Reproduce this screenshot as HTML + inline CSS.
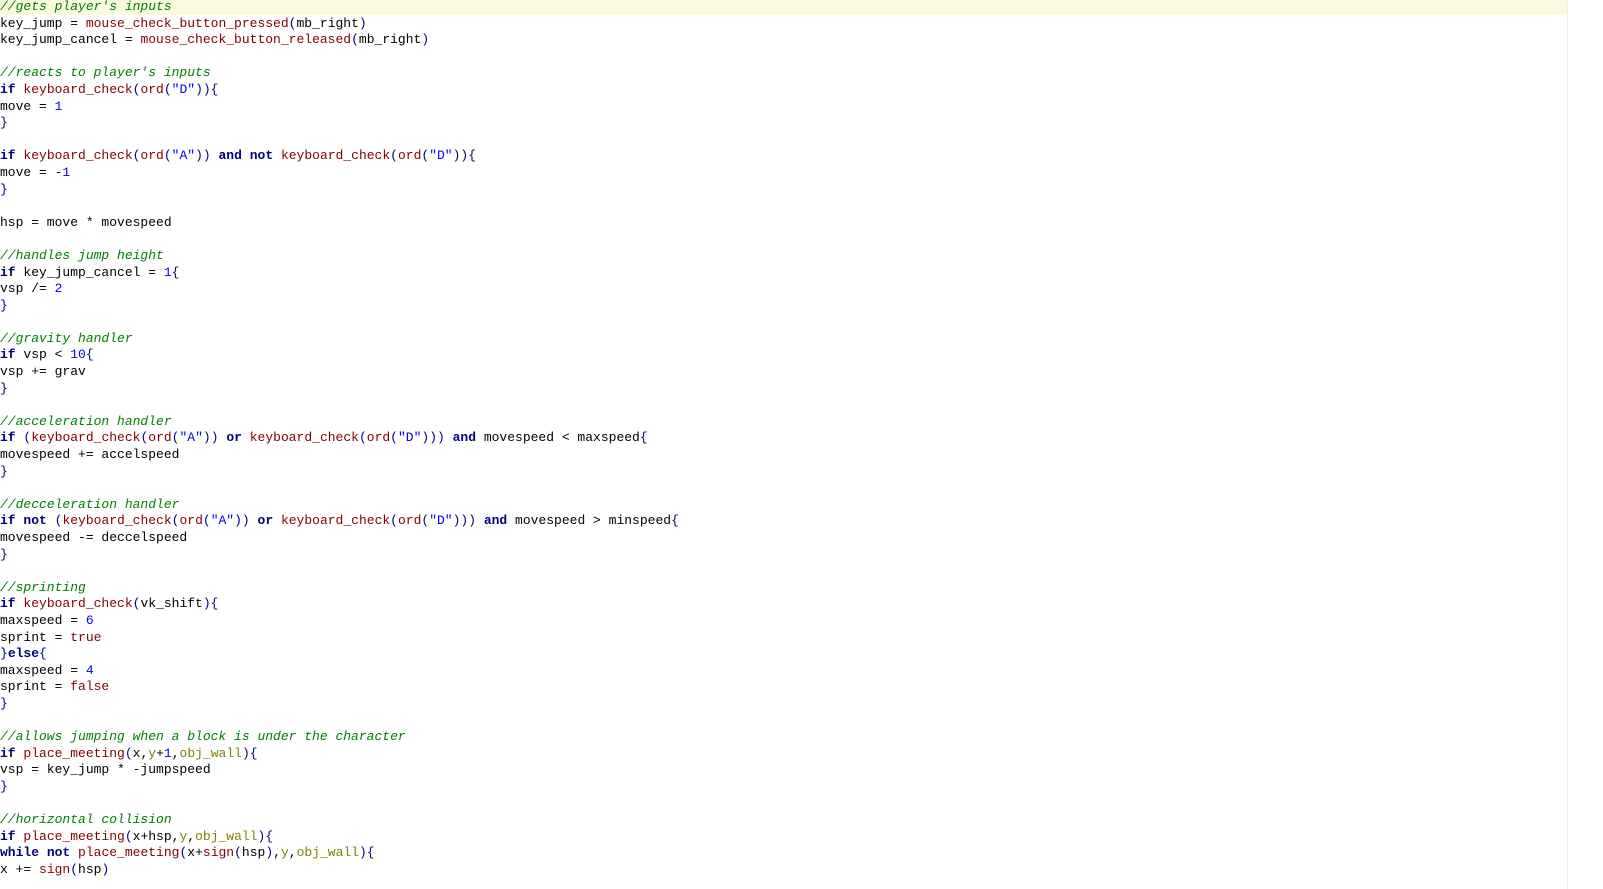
<!DOCTYPE html>
<html><head><meta charset="utf-8"><style>
html,body{margin:0;padding:0;background:#fff;width:1603px;height:889px;overflow:hidden}
pre{margin:0;font-family:"Liberation Mono",monospace;font-size:13px;line-height:16.6px;color:#000;white-space:pre;position:relative}
.hl{position:absolute;left:0;top:0;width:1568px;height:15px;background:#fafae1}
.sb{position:absolute;right:0;top:0;width:35px;height:889px;background:#fff;border-left:1px solid #f0f0f0}
.c{color:#008000;font-style:italic}
.f{color:#800000}
.k{color:#000080;font-weight:bold}
.n{color:#0000ff}
.p{color:#000080}
.o{color:#808000}
</style></head><body>
<div class="hl"></div><div class="sb"></div>
<pre style="top:-1px"><span class="c">//gets player's inputs</span>
key_jump = <span class="f">mouse_check_button_pressed</span><span class="p">(</span>mb_right<span class="p">)</span>
key_jump_cancel = <span class="f">mouse_check_button_released</span><span class="p">(</span>mb_right<span class="p">)</span>

<span class="c">//reacts to player's inputs</span>
<span class="k">if</span> <span class="f">keyboard_check</span><span class="p">(</span><span class="f">ord</span><span class="p">(</span><span class="n">"D"</span><span class="p">)){</span>
move = <span class="n">1</span>
<span class="p">}</span>

<span class="k">if</span> <span class="f">keyboard_check</span><span class="p">(</span><span class="f">ord</span><span class="p">(</span><span class="n">"A"</span><span class="p">))</span> <span class="k">and</span> <span class="k">not</span> <span class="f">keyboard_check</span><span class="p">(</span><span class="f">ord</span><span class="p">(</span><span class="n">"D"</span><span class="p">)){</span>
move = -<span class="n">1</span>
<span class="p">}</span>

hsp = move * movespeed

<span class="c">//handles jump height</span>
<span class="k">if</span> key_jump_cancel = <span class="n">1</span><span class="p">{</span>
vsp /= <span class="n">2</span>
<span class="p">}</span>

<span class="c">//gravity handler</span>
<span class="k">if</span> vsp &lt; <span class="n">10</span><span class="p">{</span>
vsp += grav
<span class="p">}</span>

<span class="c">//acceleration handler</span>
<span class="k">if</span> <span class="p">(</span><span class="f">keyboard_check</span><span class="p">(</span><span class="f">ord</span><span class="p">(</span><span class="n">"A"</span><span class="p">))</span> <span class="k">or</span> <span class="f">keyboard_check</span><span class="p">(</span><span class="f">ord</span><span class="p">(</span><span class="n">"D"</span><span class="p">)))</span> <span class="k">and</span> movespeed &lt; maxspeed<span class="p">{</span>
movespeed += accelspeed
<span class="p">}</span>

<span class="c">//decceleration handler</span>
<span class="k">if</span> <span class="k">not</span> <span class="p">(</span><span class="f">keyboard_check</span><span class="p">(</span><span class="f">ord</span><span class="p">(</span><span class="n">"A"</span><span class="p">))</span> <span class="k">or</span> <span class="f">keyboard_check</span><span class="p">(</span><span class="f">ord</span><span class="p">(</span><span class="n">"D"</span><span class="p">)))</span> <span class="k">and</span> movespeed &gt; minspeed<span class="p">{</span>
movespeed -= deccelspeed
<span class="p">}</span>

<span class="c">//sprinting</span>
<span class="k">if</span> <span class="f">keyboard_check</span><span class="p">(</span>vk_shift<span class="p">){</span>
maxspeed = <span class="n">6</span>
sprint = <span class="f">true</span>
<span class="p">}</span><span class="k">else</span><span class="p">{</span>
maxspeed = <span class="n">4</span>
sprint = <span class="f">false</span>
<span class="p">}</span>

<span class="c">//allows jumping when a block is under the character</span>
<span class="k">if</span> <span class="f">place_meeting</span><span class="p">(</span>x,<span class="o">y</span>+<span class="n">1</span>,<span class="o">obj_wall</span><span class="p">){</span>
vsp = key_jump * -jumpspeed
<span class="p">}</span>

<span class="c">//horizontal collision</span>
<span class="k">if</span> <span class="f">place_meeting</span><span class="p">(</span>x+hsp,<span class="o">y</span>,<span class="o">obj_wall</span><span class="p">){</span>
<span class="k">while</span> <span class="k">not</span> <span class="f">place_meeting</span><span class="p">(</span>x+<span class="f">sign</span><span class="p">(</span>hsp<span class="p">)</span>,<span class="o">y</span>,<span class="o">obj_wall</span><span class="p">){</span>
x += <span class="f">sign</span><span class="p">(</span>hsp<span class="p">)</span>
</pre>
</body></html>
